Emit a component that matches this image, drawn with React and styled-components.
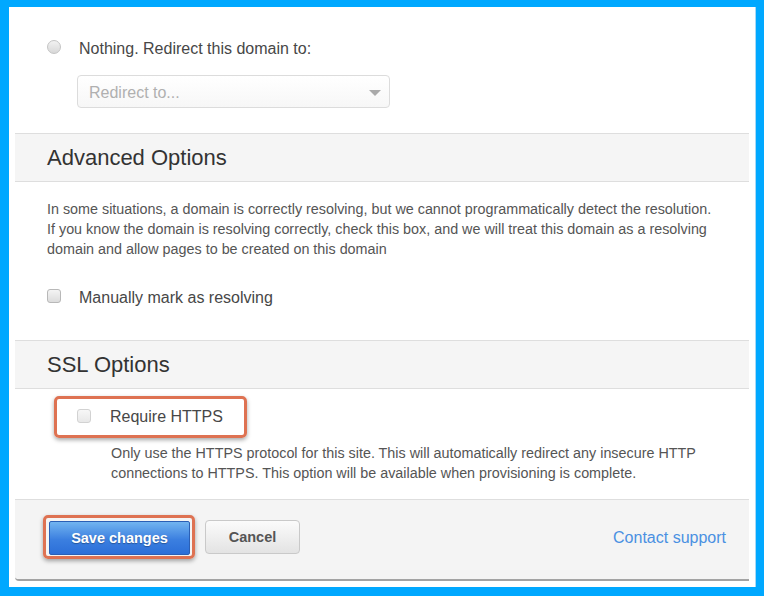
import React from "react";
import styled, { createGlobalStyle } from "styled-components";

const GlobalStyle = createGlobalStyle`
  html, body {
    margin: 0;
    padding: 0;
    background: #00a8ff;
  }
  body {
    font-family: "Liberation Sans", Arial, sans-serif;
  }
`;

const Frame = styled.div`
  box-sizing: border-box;
  height: 596px;
  padding: 7px 9px 9px 9px;
`;

const Panel = styled.div`
  background: #fff;
  height: 100%;
  box-sizing: border-box;
  padding: 0 6px 6px;
  box-shadow: 1px 0 0 #a9d9f5;
  display: flex;
  flex-direction: column;
`;

const TopSection = styled.div`
  padding: 33px 0 25px 32px;
`;

const OptionRow = styled.label`
  display: flex;
  align-items: center;
  gap: ${(p) => p.gap || 18}px;
  font-size: 16px;
  color: #474747;
  height: ${(p) => p.h || 14}px;
`;

const LabelText = styled.span`
  padding-top: 3px;
`;

const Radio = styled.span`
  width: 14px;
  height: 14px;
  box-sizing: border-box;
  border-radius: 50%;
  border: 1px solid #c4c4c4;
  background: linear-gradient(#f2f2f2, #d8d8d8);
  flex-shrink: 0;
`;

const Check = styled.span`
  width: 14px;
  height: 14px;
  box-sizing: border-box;
  border-radius: 3px;
  border: 1px solid ${(p) => (p.faint ? "#d2d2d2" : "#b8b8b8")};
  background: ${(p) =>
    p.faint ? "linear-gradient(#f7f7f7, #e8e8e8)" : "linear-gradient(#f4f4f4, #dcdcdc)"};
  flex-shrink: 0;
`;

const Select = styled.div`
  margin: 21px 0 0 30px;
  width: 313px;
  height: 33px;
  box-sizing: border-box;
  border: 1px solid #dcdcdc;
  border-radius: 4px;
  background: linear-gradient(#fff, #f7f7f7);
  display: flex;
  align-items: center;
  justify-content: space-between;
  padding: 2px 8px 0 11px;
  font-size: 16px;
  color: #b0b0b0;
`;

const Caret = styled.span`
  width: 0;
  height: 0;
  border-left: 6px solid transparent;
  border-right: 6px solid transparent;
  border-top: 6px solid #aaa;
`;

const SectionHeader = styled.div`
  height: 47px;
  background: #f5f5f5;
  border-top: 1px solid #dedede;
  border-bottom: 1px solid #dedede;
  display: flex;
  align-items: center;
  padding-left: 32px;
  font-size: 22px;
  color: #333;
`;

const SectionBody = styled.div`
  padding: ${(p) => p.pad};
`;

const Paragraph = styled.p`
  margin: ${(p) => p.m || 0};
  font-size: 14.35px;
  line-height: 20px;
  color: #555;
`;

const Highlight = styled.div`
  border: 3px solid #de7252;
  border-radius: 5px;
  box-shadow: 0 2px 4px rgba(0, 0, 0, 0.35);
  box-sizing: border-box;
`;

const HttpsBox = styled(Highlight)`
  margin-left: 39px;
  width: 193px;
  height: 42px;
  display: flex;
  align-items: center;
  padding: 0 0 3px 20px;
`;

const Footer = styled.div`
  margin-top: auto;
  background: #f4f4f4;
  border-top: 1px solid #dedede;
  border-bottom: 2px solid #a3a3a3;
  border-bottom-left-radius: 4px;
  height: 82px;
  box-sizing: border-box;
  display: flex;
  align-items: flex-start;
  padding: 15px 23px 0 28px;
`;

const SaveWrap = styled(Highlight)`
  padding: 3px 2px 1px 3px;
  display: flex;
`;

const Button = styled.button`
  height: 34px;
  box-sizing: border-box;
  border-radius: 4px;
  font-family: inherit;
  font-size: 14.5px;
  font-weight: bold;
  cursor: pointer;
`;

const PrimaryButton = styled(Button)`
  width: 141px;
  color: #fff;
  border: 1px solid #2b5fb5;
  background: linear-gradient(#72b4f0, #3b7fe0 55%, #2c6fd8);
  text-shadow: 0 1px 1px rgba(0, 0, 0, 0.3);
  border-radius: 2px;
`;

const SecondaryButton = styled(Button)`
  width: 95px;
  margin: 5px 0 0 10px;
  color: #555;
  border: 1px solid #c9c9c9;
  background: linear-gradient(#fbfbfb, #e3e3e3);
`;

const SupportLink = styled.a`
  margin: 14px 0 0 auto;
  font-size: 16px;
  color: #4a90e2;
  text-decoration: none;
`;

export default function App() {
  return (
    <>
      <GlobalStyle />
      <Frame>
        <Panel>
          <TopSection>
            <OptionRow>
              <Radio />
              <LabelText>Nothing. Redirect this domain to:</LabelText>
            </OptionRow>
            <Select>
              Redirect to...
              <Caret />
            </Select>
          </TopSection>

          <SectionHeader>Advanced Options</SectionHeader>
          <SectionBody pad="17px 26px 34px 32px">
            <Paragraph>
              In some situations, a domain is correctly resolving, but we cannot programmatically
              detect the resolution. If you know the domain is resolving correctly, check this box,
              and we will treat this domain as a resolving domain and allow pages to be created on
              this domain
            </Paragraph>
            <OptionRow h={20} style={{ marginTop: 27 }}>
              <Check />
              <LabelText>Manually mark as resolving</LabelText>
            </OptionRow>
          </SectionBody>

          <SectionHeader>SSL Options</SectionHeader>
          <SectionBody pad="7px 20px 0 0">
            <HttpsBox>
              <OptionRow gap={19}>
                <Check faint />
                <LabelText>Require HTTPS</LabelText>
              </OptionRow>
            </HttpsBox>
            <Paragraph m="5px 0 0 96px">
              Only use the HTTPS protocol for this site. This will automatically redirect any
              insecure HTTP connections to HTTPS. This option will be available when provisioning
              is complete.
            </Paragraph>
          </SectionBody>

          <Footer>
            <SaveWrap>
              <PrimaryButton>Save changes</PrimaryButton>
            </SaveWrap>
            <SecondaryButton>Cancel</SecondaryButton>
            <SupportLink href="#">Contact support</SupportLink>
          </Footer>
        </Panel>
      </Frame>
    </>
  );
}
